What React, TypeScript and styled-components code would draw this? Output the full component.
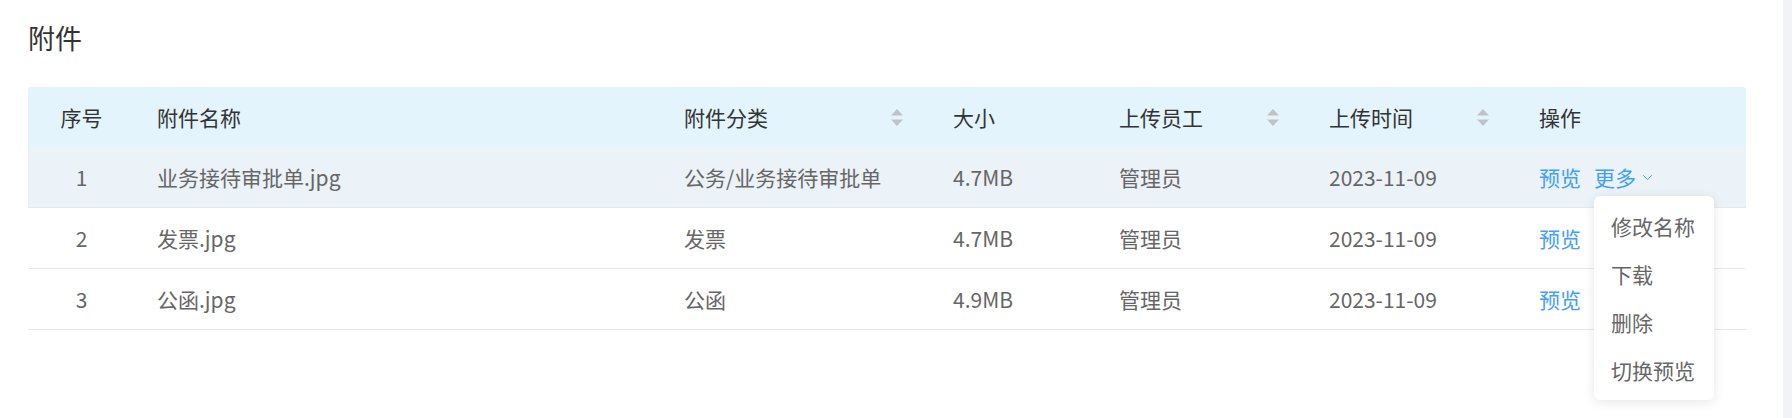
import styled, { createGlobalStyle } from "styled-components";
import { ChevronDown } from "lucide-react";

const GlobalStyle = createGlobalStyle`
  html, body {
    margin: 0;
    padding: 0;
    background: #ffffff;
    font-family: "Noto Sans CJK SC", "Noto Sans", sans-serif;
  }
  #root {
    height: 100vh;
  }
`;

type Row = {
  id: number;
  name: string;
  category: string;
  size: string;
  uploader: string;
  time: string;
};

const rows: Row[] = [
  { id: 1, name: "业务接待审批单.jpg", category: "公务/业务接待审批单", size: "4.7MB", uploader: "管理员", time: "2023-11-09" },
  { id: 2, name: "发票.jpg", category: "发票", size: "4.7MB", uploader: "管理员", time: "2023-11-09" },
  { id: 3, name: "公函.jpg", category: "公函", size: "4.9MB", uploader: "管理员", time: "2023-11-09" },
];

// header definition, widths measured off the screenshot
const columns = [
  { title: "序号", width: 107, center: true },
  { title: "附件名称", width: 527 },
  { title: "附件分类", width: 269, sortable: true },
  { title: "大小", width: 166 },
  { title: "上传员工", width: 210, sortable: true },
  { title: "上传时间", width: 210, sortable: true },
  { title: "操作", width: 229 },
];

const menuItems = ["修改名称", "下载", "删除", "切换预览"];

const SortIcon = () => (
  <SortSvg width="12" height="17" viewBox="0 0 12 17">
    <polygon points="6,0 12,6.5 0,6.5" />
    <polygon points="0,10.5 12,10.5 6,17" />
  </SortSvg>
);

const App = () => {
  return (
    <Page>
      <GlobalStyle />
      <Main>
        <Title>附件</Title>
        <Table>
          <colgroup>
            {columns.map((c) => (
              <col key={c.title} style={{ width: c.width }} />
            ))}
          </colgroup>
          <thead>
            <tr>
              {columns.map((c) => (
                <HeadCell key={c.title} $center={c.center}>
                  <HeadInner $center={c.center}>
                    <span>{c.title}</span>
                    {c.sortable && <SortIcon />}
                  </HeadInner>
                </HeadCell>
              ))}
            </tr>
          </thead>
          <tbody>
            {rows.map((row, i) => (
              <BodyRow key={row.id} $hover={i === 0}>
                <Cell $center>{row.id}</Cell>
                <Cell>{row.name}</Cell>
                <Cell>{row.category}</Cell>
                <Cell>{row.size}</Cell>
                <Cell>{row.uploader}</Cell>
                <Cell>{row.time}</Cell>
                <Cell>
                  <Actions>
                    <LinkText>预览</LinkText>
                    {i === 0 && (
                      <More>
                        <LinkText>更多</LinkText>
                        <ChevronDown size={17} strokeWidth={1.3} color="#409eff" />
                        <Dropdown>
                          {menuItems.map((m) => (
                            <MenuItem key={m}>{m}</MenuItem>
                          ))}
                        </Dropdown>
                      </More>
                    )}
                  </Actions>
                </Cell>
              </BodyRow>
            ))}
          </tbody>
        </Table>
      </Main>
      <ScrollTrack />
    </Page>
  );
};
export default App;

const Page = styled.div`
  display: flex;
  height: 100%;
  overflow: hidden;
`;

const Main = styled.main`
  flex: 1;
  padding: 18px 37px 0 28px;
`;

const ScrollTrack = styled.div`
  width: 9px;
  background: #f1f3f7;
`;

const Title = styled.h2`
  margin: 0 0 29px 0;
  height: 40px;
  line-height: 40px;
  font-size: 27px;
  font-weight: 400;
  color: #333333;
`;

const Table = styled.table`
  width: 1718px;
  table-layout: fixed;
  border-collapse: collapse;
  font-size: 21px;
`;

const HeadCell = styled.th<{ $center?: boolean }>`
  height: 60px;
  padding: 0 22px;
  background: #e3f4fc;
  color: #333333;
  font-weight: 400;
  text-align: ${(p) => (p.$center ? "center" : "left")};
  &:first-child {
    border-top-left-radius: 3px;
  }
  &:last-child {
    border-top-right-radius: 3px;
  }
`;

const HeadInner = styled.div<{ $center?: boolean }>`
  display: flex;
  align-items: center;
  justify-content: ${(p) => (p.$center ? "center" : "space-between")};
  line-height: 21px;
`;

const SortSvg = styled.svg`
  margin-right: 6px;
  fill: #bfc2c7;
`;

const BodyRow = styled.tr<{ $hover?: boolean }>`
  background: ${(p) => (p.$hover ? "#ebf2f8" : "#ffffff")};
  border-bottom: 1px solid #e6e8eb;
`;

const Cell = styled.td<{ $center?: boolean }>`
  height: 60px;
  padding: 0 22px;
  color: #666666;
  line-height: 21px;
  white-space: nowrap;
  text-align: ${(p) => (p.$center ? "center" : "left")};
`;

const Actions = styled.div`
  display: flex;
  align-items: center;
  gap: 13px;
`;

const LinkText = styled.span`
  color: #409eff;
  cursor: pointer;
`;

const More = styled.span`
  position: relative;
  display: inline-flex;
  align-items: center;
  gap: 3px;
  height: 21px;
`;

const Dropdown = styled.ul`
  position: absolute;
  top: 100%;
  left: 0;
  margin: 8px 0 0 0;
  padding: 6px 0;
  width: 120px;
  list-style: none;
  background: #ffffff;
  border-radius: 6px;
  box-shadow: 0 2px 12px rgba(0, 0, 0, 0.1);
  z-index: 10;
`;

const MenuItem = styled.li`
  height: 48px;
  line-height: 48px;
  padding: 0 17px;
  color: #666666;
  font-size: 21px;
  cursor: pointer;
`;
